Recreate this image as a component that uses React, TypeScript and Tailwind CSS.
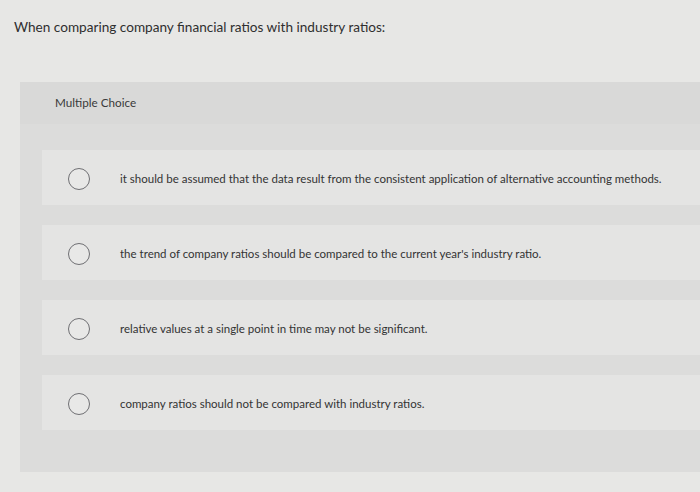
const options = [
  'it should be assumed that the data result from the consistent application of alternative accounting methods.',
  "the trend of company ratios should be compared to the current year's industry ratio.",
  'relative values at a single point in time may not be significant.',
  'company ratios should not be compared with industry ratios.',
]

export default function App() {
  return (
    <div
      className="w-[700px] h-[492px] overflow-hidden bg-[#e7e7e5] text-[#333333]"
      style={{ fontFamily: '"Lato", "Liberation Sans", sans-serif' }}
    >
      <div className="pt-[18px] pl-[14px] text-[13.6px] leading-[18px] text-[#2f2f2f]">
        When comparing company financial ratios with industry ratios:
      </div>

      <div className="mt-[46px] ml-[20px] bg-[#dddddc]">
        {/* header */}
        <div className="h-[42px] flex items-center pl-[35px] bg-[#d9d9d8] text-[11.7px] text-[#3a3a3a]">
          Multiple Choice
        </div>

        {/* options */}
        <div className="pt-[26px] pb-[42px] pl-[22px] flex flex-col gap-[20px] bg-[#dcdcdb]">
          {options.map((text) => (
            <div key={text} className="h-[55px] pt-[3px] flex items-center bg-[#e4e4e3]">
              <div className="ml-[26px] w-[22px] h-[22px] shrink-0 rounded-full border-[1.5px] border-[#6f6f73] bg-[#e8e8e7]" />
              <div className="ml-[30px] text-[11.5px] text-[#333333]">{text}</div>
            </div>
          ))}
        </div>
      </div>
    </div>
  )
}
